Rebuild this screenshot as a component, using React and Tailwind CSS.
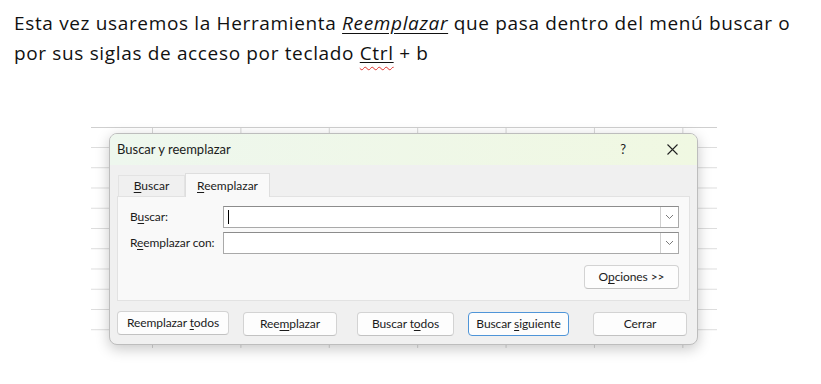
const Key = ({ children }) => <span className="underline underline-offset-2">{children}</span>

const Chevron = () => (
  <svg width="9" height="6" viewBox="0 0 9 6" fill="none">
    <path d="M1 1l3.5 3.5L8 1" stroke="#7a7a7a" strokeWidth="1" />
  </svg>
)

const Combo = ({ caret }) => (
  <div className="flex-1 h-[22px] flex border border-[#a9a9a9] border-t-[#8c8c8c] bg-white">
    <div className="flex-1 flex items-center pl-1">
      {caret && <div className="w-px h-[14px] bg-black" />}
    </div>
    <div className="w-[18px] flex items-center justify-center border-l border-[#d0d0d0] bg-white">
      <Chevron />
    </div>
  </div>
)

const Btn = ({ children, w, focus }) => (
  <button
    className={`h-[24px] ${w} rounded-[4px] bg-[#fdfdfd] text-[12px] tracking-[-0.1px] text-[#1b1b1b] whitespace-nowrap border ${
      focus ? 'border-[#4f95d8]' : 'border-[#d3d3d3] border-b-[#c2c2c2]'
    }`}
  >
    {children}
  </button>
)

export default function App() {
  return (
    <div className="w-[821px] h-[384px] bg-white overflow-hidden">
      {/* Intro paragraph */}
      <p className="pl-[14px] pt-[8px] text-[19px] leading-[30px] text-[#111] font-['Open_Sans','Noto_Sans',sans-serif] tracking-[0.65px] whitespace-nowrap">
        Esta vez usaremos la Herramienta{' '}
        <em className="underline underline-offset-[3px]">Reemplazar</em> que pasa dentro del menú buscar o
        <br />
        por sus siglas de acceso por teclado{' '}
        <span className="underline decoration-wavy decoration-[#e0322d] underline-offset-[6px] decoration-1">
          <span className="underline decoration-[#111] underline-offset-[2px]">Ctrl</span>
        </span>{' '}
        + b
      </p>

      {/* Spreadsheet backdrop */}
      <div className="ml-[91px] mt-[59px] w-[626px] h-[221px] pt-[5px] pl-[18px] border-t border-[#cfcfcf] bg-[linear-gradient(#dcdcdc_1px,transparent_1px),linear-gradient(90deg,#d6d6d6_1px,transparent_1px)] bg-[size:88.4px_20.25px] bg-[position:61px_19px]">
        {/* Dialog */}
        <div className="w-[589px] h-[212px] rounded-[8px] bg-[#f0f0f0] border border-[#bdbdbd] shadow-[0_4px_14px_rgba(0,0,0,0.22)] overflow-hidden flex flex-col font-['Lato','Noto_Sans',sans-serif] text-[#1b1b1b]">
          {/* Title bar */}
          <div className="h-[31px] shrink-0 flex items-center bg-[linear-gradient(90deg,#eef7ee,#f0f8e2)] pl-[7px] pr-[19px]">
            <span className="text-[13px]">Buscar y reemplazar</span>
            <span className="ml-auto text-[13px] mr-[41px]">?</span>
            <svg width="11" height="11" viewBox="0 0 11 11">
              <path d="M0.5 0.5l10 10M10.5 0.5l-10 10" stroke="#222" strokeWidth="1.1" />
            </svg>
          </div>

          {/* Body */}
          <div className="flex-1 flex flex-col px-[7px] pt-[7px] pb-[8px]">
            {/* Tabs */}
            <div className="flex items-end h-[24px] text-[12px]">
              <div className="h-[21px] w-[67px] border border-b-0 border-[#e3e3e3] ml-px flex items-center justify-center">
                <span>
                  <Key>B</Key>uscar
                </span>
              </div>
              <div className="h-[24px] w-[85px] bg-[#f9f9f9] border border-b-0 border-[#dedede] flex items-center justify-center -mb-px relative z-10">
                <span>
                  <Key>R</Key>eemplazar
                </span>
              </div>
            </div>

            {/* Panel */}
            <div className="h-[105px] bg-[#f9f9f9] border border-[#e2e2e2] flex flex-col pl-[12px] pr-[10px] pt-[9px] text-[12px] tracking-[-0.1px]">
              <div className="flex items-center">
                <span className="w-[93px] whitespace-nowrap">
                  B<Key>u</Key>scar:
                </span>
                <Combo caret />
              </div>
              <div className="flex items-center mt-[4px]">
                <span className="w-[93px] whitespace-nowrap">
                  R<Key>e</Key>emplazar con:
                </span>
                <Combo />
              </div>
              <div className="flex justify-end mt-[11px]">
                <Btn w="w-[95px]">
                  O<Key>p</Key>ciones &gt;&gt;
                </Btn>
              </div>
            </div>

            {/* Bottom buttons */}
            <div className="flex items-center mt-auto">
              <Btn w="w-[112px]">
                Reemplazar <Key>t</Key>odos
              </Btn>
              <div className="ml-[14px]">
                <Btn w="w-[94px]">
                  Ree<Key>m</Key>plazar
                </Btn>
              </div>
              <div className="ml-[20px]">
                <Btn w="w-[97px]">
                  Buscar t<Key>o</Key>dos
                </Btn>
              </div>
              <div className="ml-[14px]">
                <Btn w="w-[101px]" focus>
                  Buscar <Key>s</Key>iguiente
                </Btn>
              </div>
              <div className="ml-[24px]">
                <Btn w="w-[94px]">Cerrar</Btn>
              </div>
            </div>
          </div>
        </div>
      </div>
    </div>
  )
}
